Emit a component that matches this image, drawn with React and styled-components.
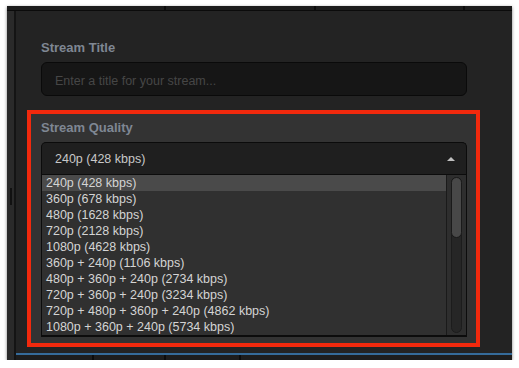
import React from "react";
import styled, { createGlobalStyle } from "styled-components";

const GlobalStyle = createGlobalStyle`
  html, body {
    margin: 0;
    padding: 0;
    background: #ffffff;
  }
  body {
    font-family: "Liberation Sans", Arial, sans-serif;
  }
`;

const options = [
  "240p (428 kbps)",
  "360p (678 kbps)",
  "480p (1628 kbps)",
  "720p (2128 kbps)",
  "1080p (4628 kbps)",
  "360p + 240p (1106 kbps)",
  "480p + 360p + 240p (2734 kbps)",
  "720p + 360p + 240p (3234 kbps)",
  "720p + 480p + 360p + 240p (4862 kbps)",
  "1080p + 360p + 240p (5734 kbps)",
];

const Page = styled.div`
  padding: 6px 0 0 7px;
`;

const Window = styled.div`
  width: 505px;
  height: 354px;
  display: flex;
  flex-direction: column;
  background: #232323;
  box-shadow: 0 1px 3px rgba(0, 0, 0, 0.5);
  overflow: hidden;
`;

const Strip = styled.div`
  display: flex;
  height: ${(p) => p.$height}px;
  background: ${(p) => p.$bg};
  border-bottom: ${(p) => (p.$line ? "1px solid #0b0b0b" : "none")};
  flex-shrink: 0;
`;

const StripCell = styled.div`
  width: ${(p) => (p.$w ? `${p.$w}px` : "auto")};
  flex: ${(p) => (p.$w ? "none" : "1")};
  border-right: ${(p) => (p.$w ? "2px solid #0c0c0c" : "none")};
`;

const Body = styled.div`
  flex: 1;
  display: flex;
  min-height: 0;
`;

const Rail = styled.div`
  width: 7px;
  background: #2a2a2a;
  border-right: 2px solid #141414;
  display: flex;
  align-items: flex-start;
  justify-content: center;
  padding-top: 177px;
`;

const Notch = styled.div`
  width: 2px;
  height: 17px;
  background: #111;
`;

const Column = styled.div`
  flex: 1;
  display: flex;
  flex-direction: column;
`;

const Content = styled.div`
  padding: 29px 32px 0 11px;
`;

const Field = styled.div`
  padding: 0 13px 14px 14px;
`;

const Label = styled.div`
  font-size: 13px;
  line-height: 15px;
  font-weight: bold;
  color: #7f8793;
  margin-bottom: 7px;
`;

const TextInput = styled.input`
  display: block;
  width: 100%;
  height: 34px;
  box-sizing: border-box;
  padding: 3px 13px 0;
  background: #161616;
  border: 1px solid #0a0a0a;
  border-radius: 6px;
  outline: none;
  font-family: "Liberation Sans", Arial, sans-serif;
  font-size: 12.5px;
  color: #ccc;

  &::placeholder {
    color: #464646;
  }
`;

const Group = styled.div`
  border: 4px solid #f2290d;
  background: #333333;
  padding: 6px 9px 6px 10px;
`;

const SelectHead = styled.div`
  height: 32px;
  box-sizing: border-box;
  display: flex;
  align-items: center;
  justify-content: space-between;
  padding: 0 11px 0 13px;
  background: #1f1f1f;
  border: 1px solid #0b0b0b;
  border-bottom: none;
  border-radius: 5px 5px 0 0;
  font-size: 12.5px;
  line-height: 16px;
  color: #c8c8c8;
`;

const Caret = styled.span`
  width: 0;
  height: 0;
  border-left: 4px solid transparent;
  border-right: 4px solid transparent;
  border-bottom: 4px solid #c0c0c0;
`;

const List = styled.div`
  display: flex;
  background: #303030;
  border: 1px solid #0c0c0c;
  border-bottom-width: 2px;
`;

const Rows = styled.div`
  flex: 1;
`;

const Row = styled.div`
  height: 16px;
  line-height: 16px;
  padding-left: 4px;
  font-size: 12.5px;
  color: #d4d4d4;
  white-space: nowrap;
  background: ${(p) => (p.$active ? "#4a4a4a" : "transparent")};
`;

const ScrollTrack = styled.div`
  width: 20px;
  border-left: 1px solid #1a1a1a;
  background: #2e2e2e;
  padding: 2px 4px;
  box-sizing: border-box;
  display: flex;
`;

const Groove = styled.div`
  flex: 1;
  border-radius: 6px;
  background: #262626;
  border: 1px solid #1c1c1c;
  display: flex;
  flex-direction: column;
`;

const Thumb = styled.div`
  height: 59px;
  margin: -1px;
  border-radius: 6px;
  background: #484848;
  border: 1px solid #1a1a1a;
`;

const Footer = styled.div`
  margin-top: 6px;
  border-top: 2px solid #356b9a;
  height: 5px;
  display: flex;
  background: #1d1d1d;
`;

export default function App() {
  return (
    <>
      <GlobalStyle />
      <Page>
        <Window>
          <Strip $height={4} $bg="#1c1c1c" $line>
            <StripCell $w={157} />
            <StripCell $w={148} />
            <StripCell $w={147} />
            <StripCell />
          </Strip>
          <Body>
            <Rail>
              <Notch />
            </Rail>
            <Column>
              <Content>
                <Field>
                  <Label>Stream Title</Label>
                  <TextInput placeholder="Enter a title for your stream..." />
                </Field>
                <Group>
                  <Label>Stream Quality</Label>
                  <SelectHead>
                    <span>240p (428 kbps)</span>
                    <Caret />
                  </SelectHead>
                  <List>
                    <Rows>
                      {options.map((o, i) => (
                        <Row key={o} $active={i === 0}>
                          {o}
                        </Row>
                      ))}
                    </Rows>
                    <ScrollTrack>
                      <Groove>
                        <Thumb />
                      </Groove>
                    </ScrollTrack>
                  </List>
                </Group>
              </Content>
              <Footer>
                <StripCell $w={76} />
                <StripCell $w={70} />
                <StripCell $w={73} />
                <StripCell />
              </Footer>
            </Column>
          </Body>
        </Window>
      </Page>
    </>
  );
}
